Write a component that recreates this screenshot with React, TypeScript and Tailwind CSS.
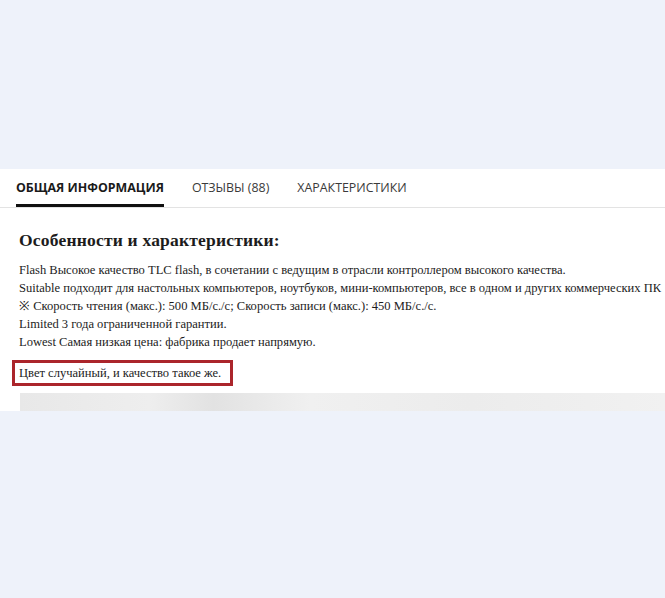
export default function App() {
  const lines = [
    "Flash Высокое качество TLC flash, в сочетании с ведущим в отрасли контроллером высокого качества.",
    "Suitable подходит для настольных компьютеров, ноутбуков, мини-компьютеров, все в одном и других коммерческих ПК",
    "※ Скорость чтения (макс.): 500 МБ/с./с; Скорость записи (макс.): 450 МБ/с./с.",
    "Limited 3 года ограниченной гарантии.",
    "Lowest Самая низкая цена: фабрика продает напрямую.",
  ];

  return (
    <div className="min-h-[598px] w-[665px] overflow-hidden bg-[#eef2fa] pt-[169px]">
      <div className="bg-white">
        {/* Tabs */}
        <div className="flex h-[39px] items-end gap-[28px] border-b border-[#e3e3e3] pl-4 font-['Open_Sans',sans-serif] text-[12.4px]">
          <div className="border-b-[3px] border-[#111] pb-[6px] font-bold text-[#1a1a1a]">
            ОБЩАЯ ИНФОРМАЦИЯ
          </div>
          <div className="pb-[9px] text-[#3a3a3a]">ОТЗЫВЫ (88)</div>
          <div className="pb-[9px] text-[#3a3a3a]">ХАРАКТЕРИСТИКИ</div>
        </div>

        {/* Description */}
        <div className="pt-[20px] font-['Liberation_Serif',serif] text-[#1c1c1c]">
          <h2 className="pl-[19px] text-[17.5px] font-bold leading-[24px] tracking-[0.2px]">
            Особенности и характеристики:
          </h2>
          <div className="mt-[9px] pl-[19px] text-[12.55px] leading-[18px] whitespace-nowrap">
            {lines.map((l, i) => (
              <div key={i}>{l}</div>
            ))}
          </div>
          <div className="ml-[12px] mt-[9px] w-[221px] border-[3px] border-[#ab252b] py-[1px] pl-[4px] text-[12.55px] leading-[18px]">
            Цвет случайный, и качество такое же.
          </div>
          <div className="ml-[20px] mt-[7px] h-[18px] bg-[linear-gradient(90deg,#e8e8e8_0%,#eeeeee_20%,#e2e2e2_30%,#f0f0f0_45%,#ececec_70%,#f1f1f1_100%)]" />
        </div>
      </div>
    </div>
  );
}
